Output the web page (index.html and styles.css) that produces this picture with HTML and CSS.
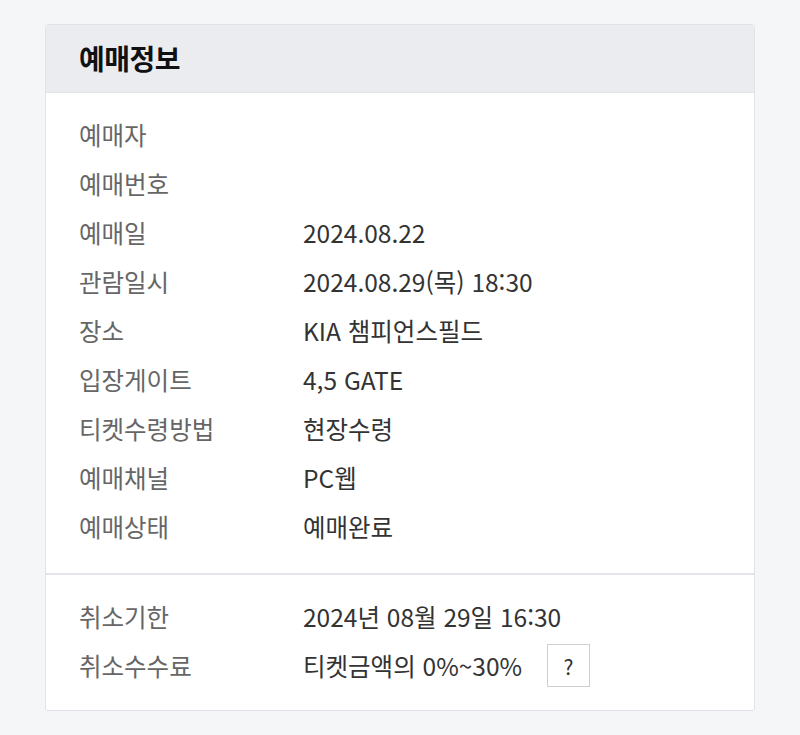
FILE: index.html
```html
<!DOCTYPE html>
<html lang="ko">
<head>
<meta charset="utf-8">
<link rel="stylesheet" href="styles.css">
</head>
<body>
<div class="card">
  <div class="card-head">예매정보</div>
  <div class="section">
    <div class="row"><span class="label">예매자</span><span class="value"></span></div>
    <div class="row"><span class="label">예매번호</span><span class="value"></span></div>
    <div class="row"><span class="label">예매일</span><span class="value">2024.08.22</span></div>
    <div class="row"><span class="label">관람일시</span><span class="value">2024.08.29(목) 18:30</span></div>
    <div class="row"><span class="label">장소</span><span class="value">KIA 챔피언스필드</span></div>
    <div class="row"><span class="label">입장게이트</span><span class="value">4,5 GATE</span></div>
    <div class="row"><span class="label">티켓수령방법</span><span class="value">현장수령</span></div>
    <div class="row"><span class="label">예매채널</span><span class="value">PC웹</span></div>
    <div class="row"><span class="label">예매상태</span><span class="value">예매완료</span></div>
  </div>
  <div class="section section-bottom">
    <div class="row"><span class="label">취소기한</span><span class="value">2024년 08월 29일 16:30</span></div>
    <div class="row"><span class="label">취소수수료</span><span class="value">티켓금액의 0%~30% <span class="help">?</span></span></div>
  </div>
</div>
</body>
</html>
```
FILE: styles.css
```css
html, body {
  margin: 0;
  padding: 0;
  background: #f5f6f8;
}
body {
  font-family: "Noto Sans CJK KR", "Noto Sans", sans-serif;
  padding: 24px 45px 0 45px;
  width: 800px;
  box-sizing: border-box;
}
.card {
  width: 710px;
  background: #ffffff;
  border: 1px solid #e2e3e8;
  border-radius: 3px;
  box-sizing: border-box;
  overflow: hidden;
}
.card-head {
  background: #ebecf0;
  height: 68px;
  display: flex;
  align-items: center;
  padding-left: 33px;
  padding-bottom: 2px;
  box-sizing: border-box;
  font-size: 28px;
  font-weight: 700;
  letter-spacing: -0.5px;
  color: #111;
  border-bottom: 1px solid #e4e5ea;
}
.section {
  padding: 17px 0 22px 33px;
}
.section-bottom {
  border-top: 2px solid #e4e5ea;
  padding: 17px 0 20px 33px;
}
.row {
  display: flex;
  height: 49px;
  align-items: center;
  font-size: 24.5px;
}
.label {
  width: 224px;
  color: #666;
}
.value {
  color: #333;
  display: flex;
  align-items: center;
}
.help {
  display: inline-flex;
  align-items: center;
  justify-content: center;
  width: 41px;
  height: 41px;
  border: 1px solid #cfcfcf;
  margin-left: 25px;
  font-size: 21px;
  color: #333;
}
```
